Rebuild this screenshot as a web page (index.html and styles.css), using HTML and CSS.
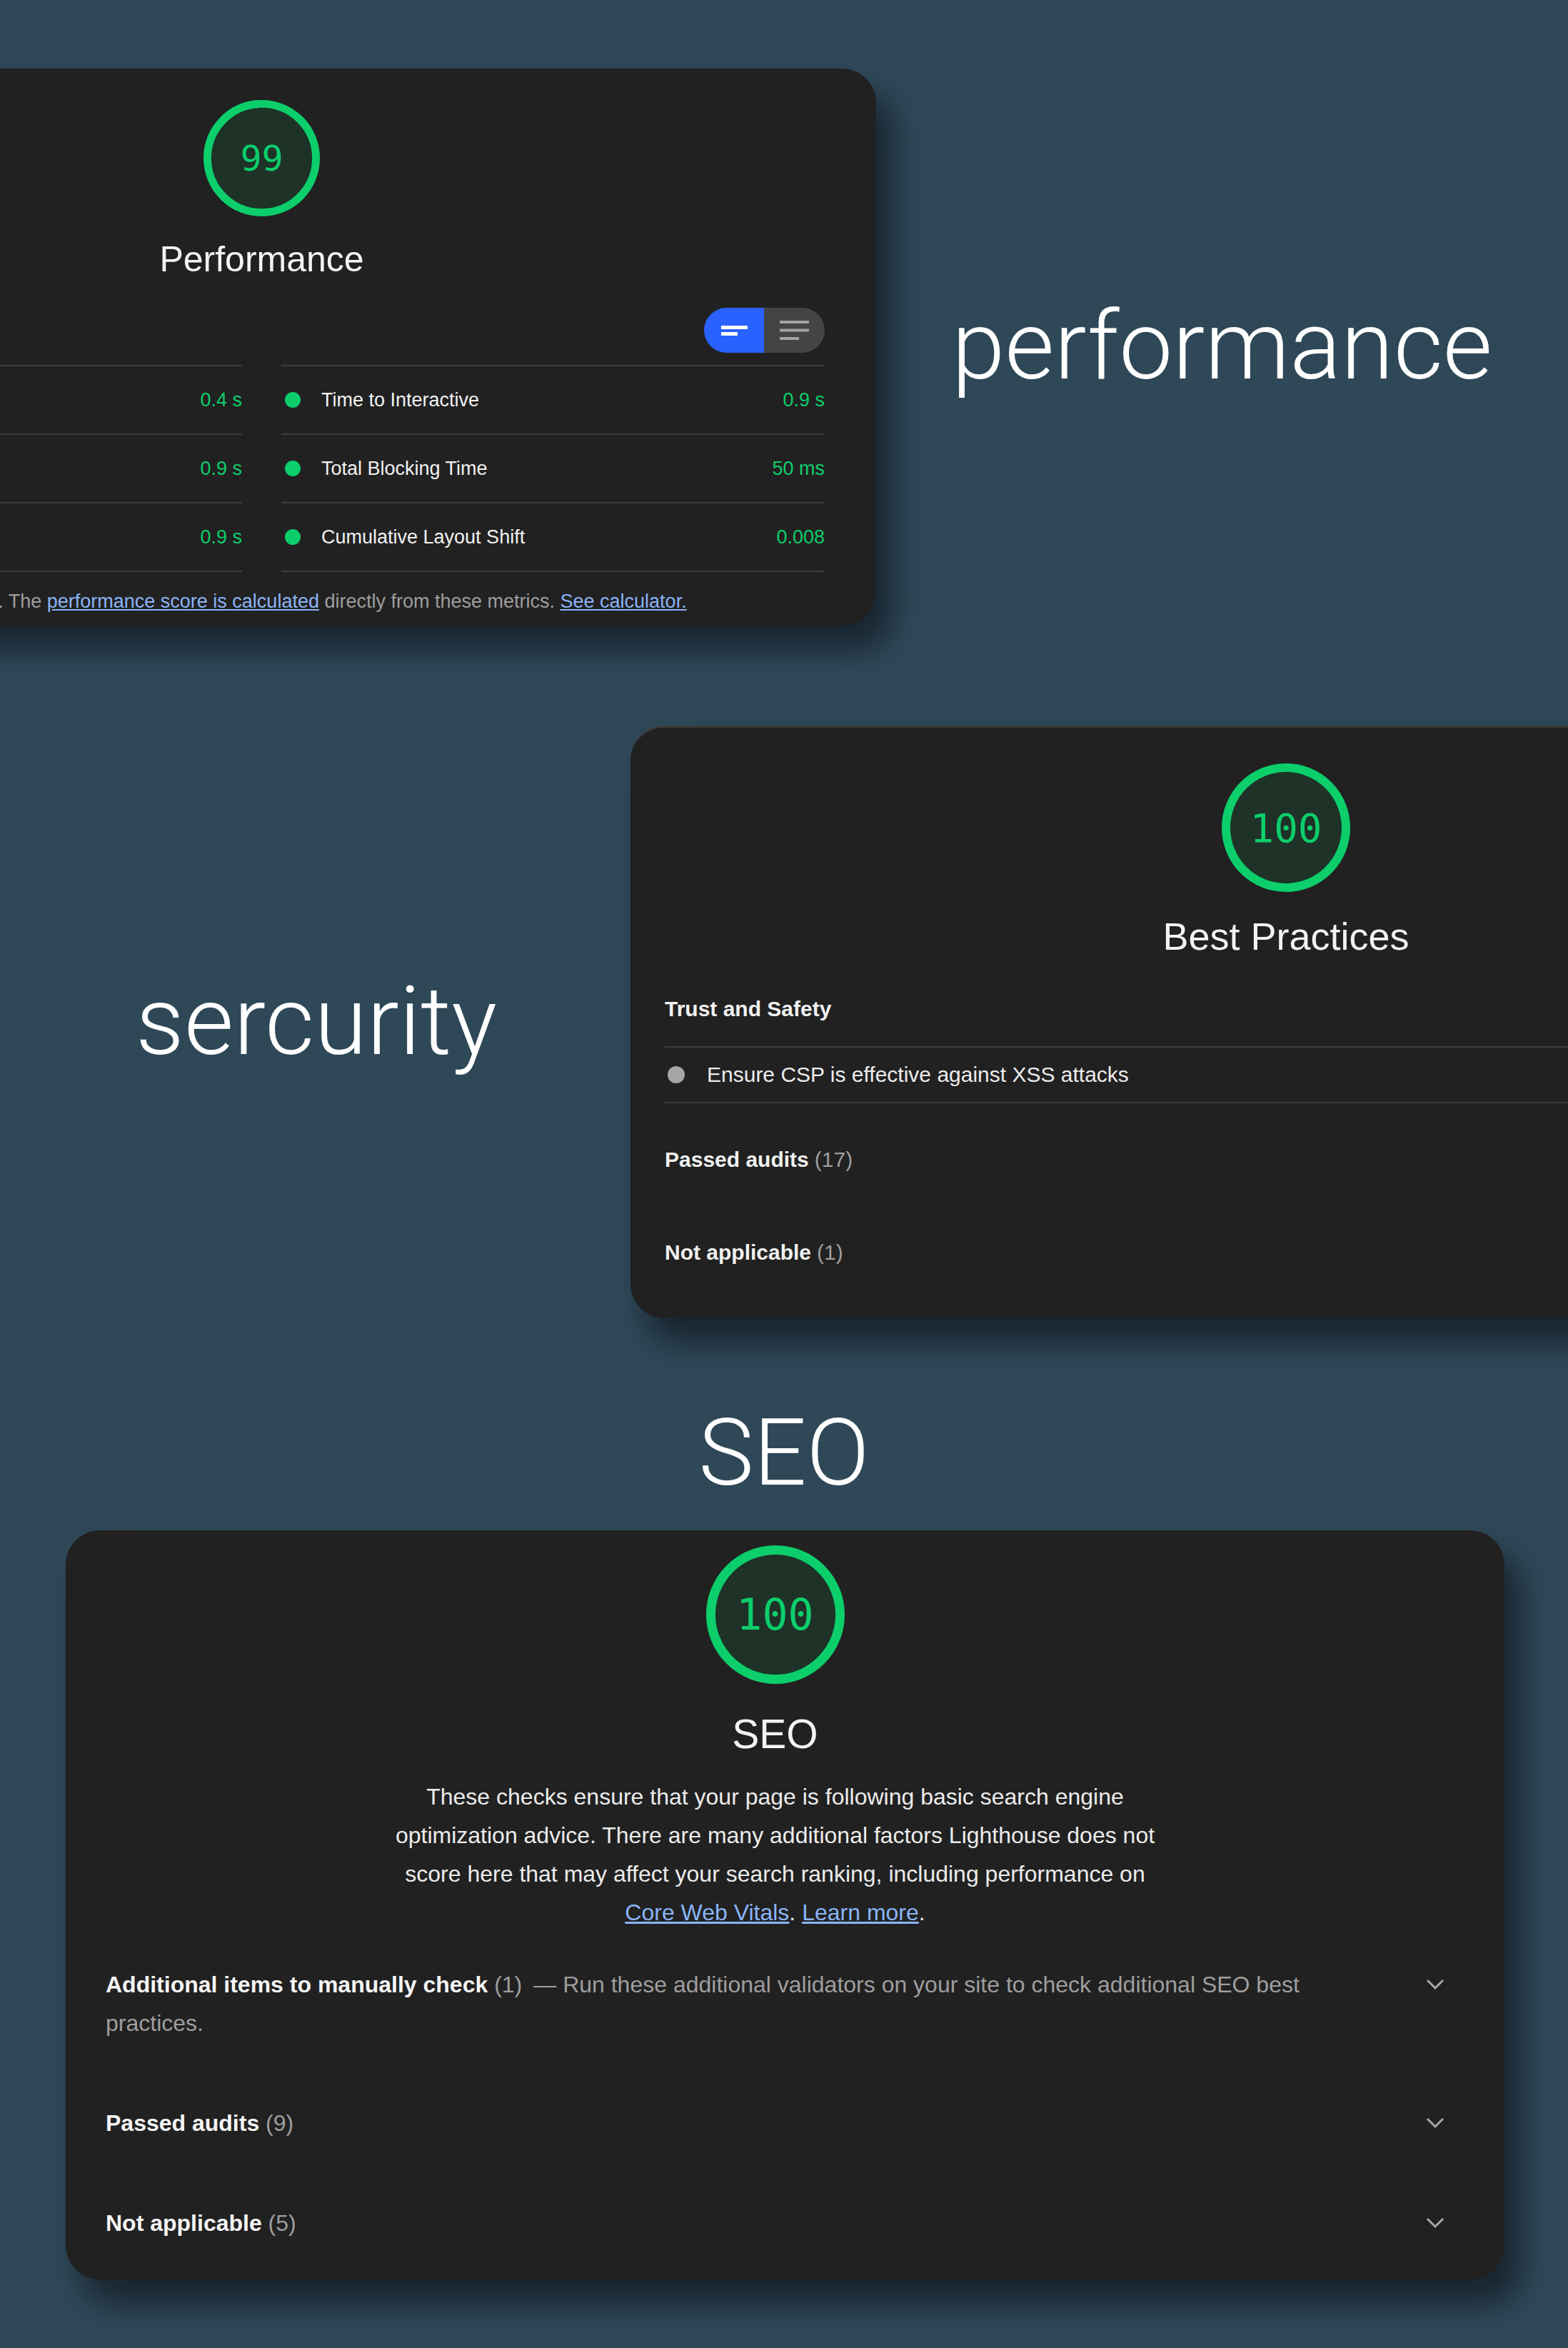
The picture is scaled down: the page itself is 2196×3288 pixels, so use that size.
FILE: index.html
```html
<!DOCTYPE html>
<html lang="en">
<head>
  <meta charset="UTF-8">
  <title>Lighthouse scores</title>
  <meta name="viewport" content="width=device-width, initial-scale=1.0">
  <link rel="stylesheet" href="styles.css">
</head>
<body>
  <main class="page">

    <!-- Performance -->
    <section class="row row-perf">
      <div class="card card-perf">
        <div class="gauge-wrap">
          <div class="gauge gauge-perf">
            <svg viewBox="0 0 120 120">
              <circle class="gauge-base" cx="60" cy="60" r="56"/>
              <circle class="gauge-arc" cx="60" cy="60" r="56" stroke-dasharray="348.3 351.9" transform="rotate(-90 60 60)"/>
            </svg>
            <span class="gauge-score">99</span>
          </div>
          <div class="gauge-title">Performance</div>
        </div>

        <div class="toggle-bar">
          <div class="toggle">
            <span class="toggle-opt active">
              <svg width="37" height="14" viewBox="0 0 37 14"><rect x="0" y="0" width="37" height="5" fill="#fff"/><rect x="0" y="9" width="23" height="5" fill="#fff"/></svg>
            </span>
            <span class="toggle-opt">
              <svg width="41" height="27" viewBox="0 0 41 27"><rect x="0" y="0" width="41" height="4" fill="#a3a3a3"/><rect x="0" y="11.5" width="41" height="4" fill="#a3a3a3"/><rect x="0" y="23" width="27" height="4" fill="#a3a3a3"/></svg>
            </span>
          </div>
        </div>

        <div class="metrics">
          <div class="metric-col">
            <div class="metric"><span class="dot"></span><span class="metric-name">First Contentful Paint</span><span class="metric-val">0.4 s</span></div>
            <div class="metric"><span class="dot"></span><span class="metric-name">Speed Index</span><span class="metric-val">0.9 s</span></div>
            <div class="metric"><span class="dot"></span><span class="metric-name">Largest Contentful Paint</span><span class="metric-val">0.9 s</span></div>
          </div>
          <div class="metric-col">
            <div class="metric"><span class="dot"></span><span class="metric-name">Time to Interactive</span><span class="metric-val">0.9 s</span></div>
            <div class="metric"><span class="dot"></span><span class="metric-name">Total Blocking Time</span><span class="metric-val">50 ms</span></div>
            <div class="metric"><span class="dot"></span><span class="metric-name">Cumulative Layout Shift</span><span class="metric-val">0.008</span></div>
          </div>
        </div>

        <p class="perf-note">Values are estimated and may vary. The <a href="#">performance score is calculated</a> directly from these metrics. <a href="#">See calculator.</a></p>
      </div>

      <h2 class="label label-perf">performance</h2>
    </section>

    <!-- Best practices -->
    <section class="row row-bp">
      <h2 class="label label-security">sercurity</h2>

      <div class="card card-bp">
        <div class="gauge-wrap">
          <div class="gauge gauge-bp">
            <svg viewBox="0 0 120 120">
              <circle class="gauge-base" cx="60" cy="60" r="56"/>
              <circle class="gauge-arc" cx="60" cy="60" r="56" stroke-dasharray="351.9 351.9" transform="rotate(-90 60 60)"/>
            </svg>
            <span class="gauge-score">100</span>
          </div>
          <div class="gauge-title">Best Practices</div>
        </div>

        <div class="group-head">Trust and Safety</div>
        <div class="audit"><span class="dot dot-gray"></span>Ensure CSP is effective against XSS attacks</div>

        <div class="clump">Passed audits <span class="count">(17)</span></div>
        <div class="clump">Not applicable <span class="count">(1)</span></div>
      </div>
    </section>

    <!-- SEO -->
    <section class="seo-block">
      <h2 class="label label-seo">SEO</h2>

      <div class="card card-seo">
        <div class="gauge-wrap">
          <div class="gauge gauge-seo">
            <svg viewBox="0 0 120 120">
              <circle class="gauge-base" cx="60" cy="60" r="56"/>
              <circle class="gauge-arc" cx="60" cy="60" r="56" stroke-dasharray="351.9 351.9" transform="rotate(-90 60 60)"/>
            </svg>
            <span class="gauge-score">100</span>
          </div>
          <div class="gauge-title">SEO</div>
        </div>

        <p class="seo-desc">These checks ensure that your page is following basic search engine optimization advice. There are many additional factors Lighthouse does not score here that may affect your search ranking, including performance on <a href="#">Core Web Vitals</a>. <a href="#">Learn more</a>.</p>

        <div class="seo-group">
          <div class="seo-group-text"><b>Additional items to manually check</b> <span class="count">(1)</span><span class="seo-group-desc">— Run these additional validators on your site to check additional SEO best practices.</span></div>
          <svg class="chevron" width="26" height="16" viewBox="0 0 26 16"><polyline points="2,2 13,13 24,2"/></svg>
        </div>
        <div class="seo-group">
          <div class="seo-group-text"><b>Passed audits</b> <span class="count">(9)</span></div>
          <svg class="chevron" width="26" height="16" viewBox="0 0 26 16"><polyline points="2,2 13,13 24,2"/></svg>
        </div>
        <div class="seo-group">
          <div class="seo-group-text"><b>Not applicable</b> <span class="count">(5)</span></div>
          <svg class="chevron" width="26" height="16" viewBox="0 0 26 16"><polyline points="2,2 13,13 24,2"/></svg>
        </div>
      </div>
    </section>

  </main>
</body>
</html>
```

FILE: styles.css
```css
body {
  margin: 0;
  background: #2f4858;
  font-family: 'Liberation Sans', Arial, sans-serif;
  color: #f1f1f1;
}

.page {
  overflow: hidden;
  min-height: 100vh;
  padding-bottom: 97px;
  box-sizing: border-box;
}

/* Big thin captions */
.label {
  margin: 0;
  font-family: Roboto, 'Liberation Sans', sans-serif;
  font-weight: 300;
  font-size: 134px;
  line-height: 1;
  color: #fff;
  white-space: nowrap;
}

/* Cards */
.card {
  background: #212121;
  border-radius: 48px;
  box-shadow: 22px 34px 44px rgba(8, 14, 20, 0.6);
  box-sizing: border-box;
  flex-shrink: 0;
}

/* Gauges */
.gauge-wrap {
  display: flex;
  flex-direction: column;
  align-items: center;
}
.gauge {
  position: relative;
}
.gauge svg {
  display: block;
  width: 100%;
  height: 100%;
}
.gauge-base {
  fill: rgba(12, 206, 107, 0.1);
  stroke: rgba(12, 206, 107, 0.1);
  stroke-width: 8;
}
.gauge-arc {
  fill: none;
  stroke: #0cce6b;
  stroke-width: 8;
  stroke-linecap: round;
}
.gauge-score {
  position: absolute;
  inset: 0;
  display: flex;
  align-items: center;
  justify-content: center;
  font-family: 'DejaVu Sans Mono', 'Liberation Mono', monospace;
  color: #0cce6b;
}
.gauge-title {
  color: #f3f3f3;
  line-height: 1.2;
}

/* Performance */
.row-perf {
  display: flex;
  align-items: flex-start;
  padding-top: 96px;
}
.card-perf {
  width: 1721px;
  margin-left: -494px;
  padding: 44px 72px 14px;
}
.gauge-perf { width: 163px; height: 163px; }
.gauge-perf .gauge-score { font-size: 50px; }
.card-perf .gauge-title {
  font-size: 50px;
  margin-top: 30px;
}
.label-perf {
  margin-left: 106px;
  margin-top: 322px;
}

.toggle-bar {
  display: flex;
  justify-content: flex-end;
  margin-top: 38px;
}
.toggle {
  display: flex;
  height: 63px;
  border-radius: 32px;
  overflow: hidden;
}
.toggle-opt {
  width: 85px;
  display: flex;
  align-items: center;
  justify-content: center;
  background: #444;
}
.toggle-opt.active {
  width: 84px;
  background: #2962ff;
}

.metrics {
  display: grid;
  grid-template-columns: 1fr 1fr;
  column-gap: 55px;
  margin-top: 17px;
}
.metric {
  display: flex;
  align-items: center;
  height: 94px;
  border-top: 2px solid #3d3d3d;
  font-size: 27px;
}
.metric:last-child {
  border-bottom: 2px solid #3d3d3d;
}
.dot {
  width: 22px;
  height: 22px;
  border-radius: 50%;
  background: #0cce6b;
  margin: 0 29px 0 5px;
  flex-shrink: 0;
}
.metric-name {
  flex: 1;
  color: #f1f1f1;
}
.metric-val {
  color: #0cce6b;
}

.perf-note {
  margin: 0;
  padding-top: 21px;
  font-size: 27px;
  line-height: 40px;
  color: #9e9e9e;
  white-space: nowrap;
}
.perf-note a,
.seo-desc a {
  color: #8ab4f8;
}

/* Best practices */
.row-bp {
  display: flex;
  align-items: flex-start;
  margin-top: 140px;
}
.label-security {
  width: 883px;
  flex-shrink: 0;
  box-sizing: border-box;
  padding-left: 190px;
  margin-top: 348px;
}
.card-bp {
  width: 1836px;
  padding: 50px 48px 27px;
  border-top: 3px solid #3a3a3a;
}
.gauge-bp { width: 180px; height: 180px; }
.gauge-bp .gauge-score { font-size: 56px; }
.card-bp .gauge-title {
  font-size: 54px;
  margin-top: 30px;
}
.group-head {
  margin-top: 49px;
  padding-bottom: 32px;
  border-bottom: 2px solid #3d3d3d;
  font-size: 30px;
  font-weight: 700;
  line-height: 40px;
}
.audit {
  display: flex;
  align-items: center;
  height: 76px;
  border-bottom: 2px solid #3d3d3d;
  font-size: 30px;
  color: #ececec;
}
.dot-gray {
  width: 24px;
  height: 24px;
  background: #a6a6a6;
  margin: 0 31px 0 4px;
}
.clump {
  display: flex;
  align-items: center;
  height: 130px;
  font-size: 30px;
  font-weight: 700;
}
.audit + .clump { margin-top: 14px; }
.count {
  font-weight: 400;
  color: #9e9e9e;
  margin-left: 8px;
}

/* SEO */
.seo-block {
  margin-top: 124px;
}
.label-seo {
  text-align: center;
  font-size: 130px;
}
.card-seo {
  width: 2015px;
  margin: 43px 0 0 92px;
  padding: 21px 84px 52px 56px;
}
.gauge-seo { width: 194px; height: 194px; }
.gauge-seo .gauge-score { font-size: 60px; }
.card-seo .gauge-title {
  font-size: 57px;
  margin-top: 36px;
}
.seo-desc {
  max-width: 1100px;
  margin: 27px auto 0;
  text-align: center;
  font-size: 32px;
  line-height: 54px;
  color: #ececec;
}
.seo-group {
  display: flex;
  align-items: flex-start;
  margin-top: 86px;
  font-size: 32px;
  line-height: 54px;
}
.seo-desc + .seo-group { margin-top: 47px; }
.seo-group-text {
  flex: 1;
  margin-right: 106px;
}
.seo-group-text b { color: #f5f5f5; }
.seo-group-text .count { margin-left: 0; }
.seo-group-desc {
  color: #9e9e9e;
  margin-left: 16px;
}
.chevron {
  margin-top: 19px;
  flex-shrink: 0;
}
.chevron polyline {
  fill: none;
  stroke: #a8a8a8;
  stroke-width: 3;
}
```
